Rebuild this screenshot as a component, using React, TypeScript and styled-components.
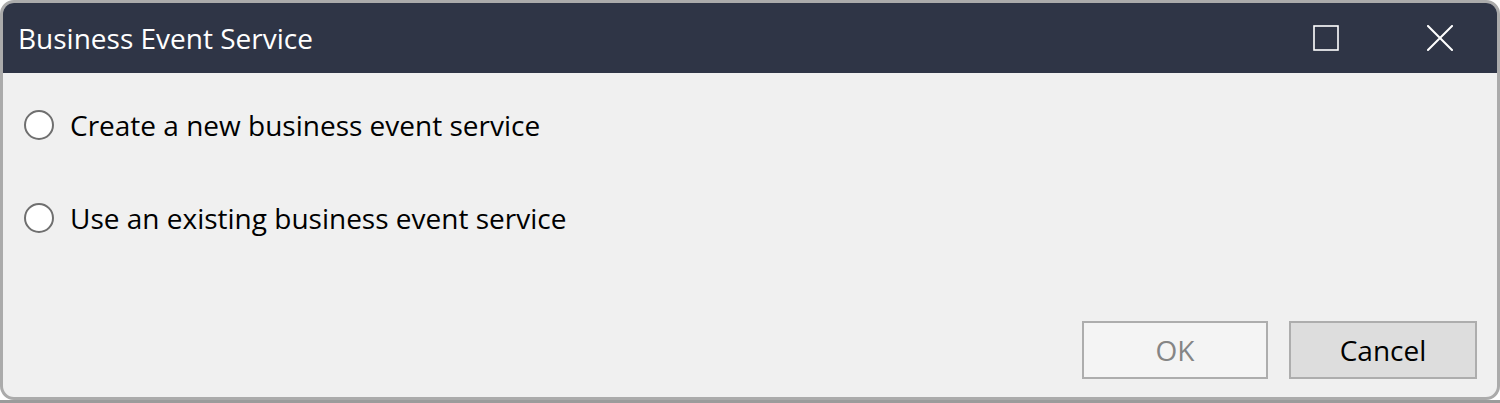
import React from 'react';
import styled, { createGlobalStyle } from 'styled-components';

const GlobalStyle = createGlobalStyle`
  html, body {
    margin: 0;
    padding: 0;
    background: #ffffff;
  }
  * {
    box-sizing: border-box;
  }
`;

const Screen = styled.div`
  width: 1500px;
  height: 403px;
  overflow: hidden;
  display: flex;
  flex-direction: column;
  font-family: 'Open Sans', 'Noto Sans', 'Liberation Sans', sans-serif;
`;

const Dialog = styled.div`
  height: 400px;
  flex: none;
  display: flex;
  flex-direction: column;
  border: 3px solid #ababab;
  border-radius: 14px;
  background: #f0f0f0;
  overflow: hidden;
`;

const TitleBar = styled.div`
  height: 70px;
  flex: none;
  display: flex;
  align-items: center;
  background: #2f3546;
  color: #ffffff;
`;

const Title = styled.div`
  flex: 1;
  padding-left: 15px;
  font-size: 28px;
`;

const WindowButton = styled.button`
  width: 114px;
  height: 70px;
  border: none;
  background: transparent;
  display: flex;
  align-items: center;
  justify-content: center;
  padding: 0;
`;

const Content = styled.div`
  flex: 1;
  display: flex;
  flex-direction: column;
  gap: 47px;
  padding: 29px 21px 0;
`;

const Option = styled.label`
  height: 46px;
  display: flex;
  align-items: center;
  gap: 16px;
  font-size: 28px;
  color: #000000;
`;

const Radio = styled.span`
  width: 30px;
  height: 30px;
  border-radius: 50%;
  border: 2px solid #6f6f6f;
  background: #ffffff;
  flex: none;
`;

const Footer = styled.div`
  display: flex;
  justify-content: flex-end;
  gap: 21px;
  padding: 0 20px 18px;
`;

const DialogButton = styled.button<{ $primary?: boolean; $width: number }>`
  width: ${(p) => p.$width}px;
  height: 58px;
  border: 2px solid #adadad;
  background: ${(p) => (p.$primary ? '#f4f4f4' : '#dddddd')};
  color: ${(p) => (p.$primary ? '#858585' : '#000000')};
  font-family: inherit;
  font-size: 28px;
  padding: 0;
`;

const Behind = styled.div`
  height: 3px;
  flex: none;
  background: #9b9b9b;
  overflow: hidden;
  color: #2d3a4a;
  font-size: 26px;
  line-height: 26px;
  padding-left: 40px;
  white-space: nowrap;
`;

const BehindText = styled.div`
  margin-top: 1px;
  word-spacing: 6px;
`;

export default function App() {
  return (
    <>
      <GlobalStyle />
      <Screen>
        <Dialog>
          <TitleBar>
            <Title>Business Event Service</Title>
            <WindowButton aria-label="Maximize">
              <svg width="26" height="26" viewBox="0 0 26 26">
                <rect x="1" y="1" width="24" height="24" fill="none" stroke="#ffffff" strokeWidth="1.6" />
              </svg>
            </WindowButton>
            <WindowButton aria-label="Close">
              <svg width="26" height="26" viewBox="0 0 26 26">
                <path d="M1 1 L25 25 M25 1 L1 25" stroke="#ffffff" strokeWidth="2" strokeLinecap="square" />
              </svg>
            </WindowButton>
          </TitleBar>
          <Content>
            <Option>
              <Radio />
              Create a new business event service
            </Option>
            <Option>
              <Radio />
              Use an existing business event service
            </Option>
          </Content>
          <Footer>
            <DialogButton $primary $width={186} disabled>
              OK
            </DialogButton>
            <DialogButton $width={188}>Cancel</DialogButton>
          </Footer>
        </Dialog>
        <Behind>
          <BehindText>
            to enable the use of business events of other applications to be simplified in your application
          </BehindText>
        </Behind>
      </Screen>
    </>
  );
}
